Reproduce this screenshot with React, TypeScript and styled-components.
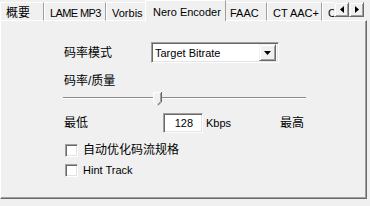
import React from 'react'
import styled, { createGlobalStyle } from 'styled-components'

const GlobalStyle = createGlobalStyle`
  html, body {
    margin: 0;
    padding: 0;
    background: #f0f0f0;
  }
  body {
    width: 370px;
    height: 206px;
    overflow: hidden;
    font-family: "Liberation Sans", "Noto Sans CJK SC", sans-serif;
    font-size: 11px;
    color: #000;
  }
`

const Window = styled.div`
  width: 370px;
  height: 206px;
  background: #f0f0f0;
`

const TabStrip = styled.div`
  display: flex;
  align-items: flex-end;
  height: 20px;
  position: relative;
  z-index: 1;
`

const TabList = styled.div`
  display: flex;
  align-items: flex-end;
  width: 334px;
  height: 21px;
  margin-bottom: -1px;
  overflow: hidden;
`

const Tab = styled.div<{ $w: number; $active?: boolean; $cjk?: boolean; $ls?: number }>`
  flex: none;
  box-sizing: border-box;
  width: ${(p) => p.$w}px;
  height: ${(p) => (p.$active ? 21 : 19)}px;
  margin: 0 ${(p) => (p.$active ? -2 : 0)}px 0 ${(p) => (p.$active ? -2 : 0)}px;
  padding: ${(p) => (p.$active ? '4px 0 0 7px' : '3px 0 0 5px')};
  border-top: 1px solid #fff;
  border-left: 1px solid #fff;
  border-right: 1px solid #a0a0a0;
  border-bottom: ${(p) => (p.$active ? 'none' : '1px solid #fff')};
  background: #f0f0f0;
  position: relative;
  z-index: ${(p) => (p.$active ? 2 : 0)};
  font-size: ${(p) => (p.$cjk ? 12 : 11)}px;
  letter-spacing: ${(p) => p.$ls ?? 0}px;
  line-height: 14px;
  white-space: nowrap;
`

const ScrollButtons = styled.div`
  display: flex;
  align-self: flex-start;
  margin-top: 2px;
`

const RaisedButton = styled.div<{ $w: number; $h: number }>`
  box-sizing: border-box;
  width: ${(p) => p.$w}px;
  height: ${(p) => p.$h}px;
  display: flex;
  align-items: center;
  justify-content: center;
  background: #f0f0f0;
  border-top: 1px solid #f0f0f0;
  border-left: 1px solid #f0f0f0;
  border-right: 1px solid #696969;
  border-bottom: 1px solid #696969;
  box-shadow: inset 1px 1px 0 #fff, inset -1px -1px 0 #a0a0a0;
`

const Panel = styled.div`
  box-sizing: border-box;
  width: 367px;
  height: 179px;
  border-top: 1px solid #fff;
  border-left: 1px solid #fff;
  border-right: 1px solid #696969;
  border-bottom: 1px solid #696969;
  box-shadow: inset -1px -1px 0 #a0a0a0;
  padding: 21px 0 0 63px;
  display: flex;
  flex-direction: column;
`

const Row = styled.div<{ $mt?: number; $h: number; $w?: number }>`
  display: flex;
  align-items: center;
  height: ${(p) => p.$h}px;
  margin-top: ${(p) => p.$mt ?? 0}px;
  width: ${(p) => (p.$w ? `${p.$w}px` : 'auto')};
`

const Label = styled.div<{ $w?: number; $cjk?: boolean; $pt?: number; $ml?: number }>`
  flex: none;
  width: ${(p) => (p.$w ? `${p.$w}px` : 'auto')};
  margin-left: ${(p) => p.$ml ?? 0}px;
  font-size: ${(p) => (p.$cjk ? 12 : 11)}px;
  line-height: 14px;
  padding-top: ${(p) => p.$pt ?? 0}px;
  align-self: ${(p) => (p.$pt ? 'flex-start' : 'center')};
  white-space: nowrap;
`

const Spacer = styled.div`
  flex: 1;
`

const Sunken = styled.div<{ $w: number; $h: number }>`
  box-sizing: border-box;
  flex: none;
  width: ${(p) => p.$w}px;
  height: ${(p) => p.$h}px;
  background: #fff;
  border-top: 1px solid #a0a0a0;
  border-left: 1px solid #a0a0a0;
  border-right: 1px solid #fff;
  border-bottom: 1px solid #fff;
  box-shadow: inset 1px 1px 0 #696969, inset -1px -1px 0 #e3e3e3;
`

const Combo = styled(Sunken)`
  display: flex;
  align-items: center;
  padding: 2px;
`

const ComboText = styled.div`
  flex: 1;
  padding-left: 1px;
  line-height: 14px;
`

const NumberBox = styled(Sunken)`
  display: flex;
  align-items: center;
  justify-content: flex-end;
  padding-right: 9px;
  line-height: 14px;
`

const Slider = styled.div`
  position: relative;
  width: 243px;
  height: 15px;
  margin-left: -1px;
`

const Track = styled.div`
  position: absolute;
  left: 0;
  right: 0;
  top: 6px;
  height: 1px;
  background: #8c8c8c;
  border-bottom: 1px solid #fff;
`

const Thumb = styled.svg`
  position: absolute;
  top: 1px;
`

const CheckRow = styled.label`
  display: flex;
  align-items: center;
  gap: 5px;
  margin-left: 1px;
`

const CheckBox = styled(Sunken)``

const Triangle = ({ dir }: { dir: 'down' | 'left' | 'right' }) => {
  if (dir === 'down') {
    return (
      <svg width="7" height="4" viewBox="0 0 7 4">
        <polygon points="0,0 7,0 3.5,4" fill="#000" />
      </svg>
    )
  }
  return (
    <svg width="4" height="7" viewBox="0 0 4 7">
      <polygon points={dir === 'left' ? '4,0 4,7 0,3.5' : '0,0 0,7 4,3.5'} fill="#000" />
    </svg>
  )
}

const tabs = [
  { label: '概要', w: 44, cjk: true },
  { label: 'LAME MP3', w: 62, ls: -0.6 },
  { label: 'Vorbis', w: 41 },
  { label: 'Nero Encoder', w: 81, active: true },
  { label: 'FAAC', w: 43 },
  { label: 'CT AAC+', w: 55 },
  { label: 'C', w: 30 },
]

const min = 8
const max = 320
const bitrate = 128

export default function App() {
  const thumbLeft = Math.round(((bitrate - min) / (max - min)) * 235)

  return (
    <Window>
      <GlobalStyle />
      <TabStrip>
        <TabList>
          {tabs.map((t) => (
            <Tab key={t.label} $w={t.w} $active={t.active} $cjk={t.cjk} $ls={t.ls}>
              {t.label}
            </Tab>
          ))}
        </TabList>
        <ScrollButtons>
          <RaisedButton $w={15} $h={15}>
            <Triangle dir="left" />
          </RaisedButton>
          <RaisedButton $w={15} $h={15}>
            <Triangle dir="right" />
          </RaisedButton>
        </ScrollButtons>
      </TabStrip>
      <Panel>
        <Row $h={21}>
          <Label $w={87} $cjk $pt={4}>码率模式</Label>
          <Combo $w={128} $h={21}>
            <ComboText>Target Bitrate</ComboText>
            <RaisedButton $w={17} $h={17}>
              <Triangle dir="down" />
            </RaisedButton>
          </Combo>
        </Row>
        <Row $mt={11} $h={14}>
          <Label $cjk>码率/质量</Label>
        </Row>
        <Row $mt={3} $h={15}>
          <Slider>
            <Track />
            <Thumb width="9" height="14" viewBox="0 0 9 14" style={{ left: thumbLeft }}>
              <polygon points="0,0 9,0 9,10 4.5,14 0,10" fill="#f0f0f0" />
              <polyline points="0.5,10 0.5,0.5 8.5,0.5" fill="none" stroke="#fff" strokeWidth="1" />
              <polyline points="8.5,0 8.5,10 4.5,13.5" fill="none" stroke="#696969" strokeWidth="1" />
              <polyline points="7.5,1 7.5,9.5 4.5,12.2" fill="none" stroke="#a0a0a0" strokeWidth="1" />
              <polyline points="0.5,10 4.5,13.5" fill="none" stroke="#fff" strokeWidth="1" />
            </Thumb>
          </Slider>
        </Row>
        <Row $mt={7} $h={20} $w={240}>
          <Label $w={99} $cjk>最低</Label>
          <NumberBox $w={40} $h={20}>{bitrate}</NumberBox>
          <Label $ml={3}>Kbps</Label>
          <Spacer />
          <Label $cjk>最高</Label>
        </Row>
        <Row $mt={10} $h={14}>
          <CheckRow>
            <CheckBox $w={13} $h={13} />
            <Label $cjk>自动优化码流规格</Label>
          </CheckRow>
        </Row>
        <Row $mt={6} $h={14}>
          <CheckRow>
            <CheckBox $w={13} $h={13} />
            <Label>Hint Track</Label>
          </CheckRow>
        </Row>
      </Panel>
    </Window>
  )
}
